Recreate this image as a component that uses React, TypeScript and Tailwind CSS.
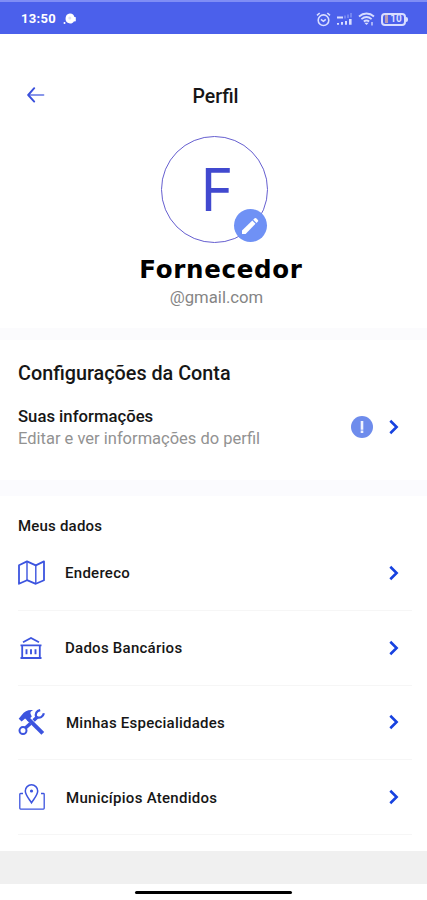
import React from 'react';

type IconProps = { className?: string };

const ChevronIcon: React.FC<IconProps> = ({ className }) => (
    <svg viewBox="0 0 10 16" fill="none" stroke="currentColor" strokeWidth="2.6" className={className}>
        <path d="M1.3 1.8 7.6 8l-6.3 6.2" />
    </svg>
);

const BackIcon: React.FC<IconProps> = ({ className }) => (
    <svg viewBox="0 0 18 16" fill="none" stroke="currentColor" strokeLinecap="round" strokeLinejoin="round" className={className}>
        <path d="M7.2 1.2 1.2 8l6 6.6" strokeWidth="1.9" />
        <path d="M1.6 8h15" strokeWidth="1.6" opacity=".8" />
    </svg>
);

const PencilIcon: React.FC<IconProps> = ({ className }) => (
    <svg viewBox="0 0 18 18" fill="currentColor" className={className}>
        <path d="M1 17v-3.6L11.3 3.6l3.2 3.2L4.6 17Z" />
        <path d="m12.2 2.7 1.4-1.4q.8-.7 1.6 0l1.7 1.7q.7.8 0 1.6l-1.4 1.4Z" />
    </svg>
);

const MapIcon: React.FC<IconProps> = ({ className }) => (
    <svg viewBox="0 0 27 25" fill="none" stroke="currentColor" strokeLinejoin="round" className={className}>
        <path d="M1 5.2 9 1.4l8.8 4L26 1.4v18.8l-8.2 3.6-8.8-3.6-8 3.6Z" strokeWidth="1.8" />
        <path d="M9 1.4v18.8M17.8 5.4v18.4" strokeWidth="1.4" />
    </svg>
);

const BankIcon: React.FC<IconProps> = ({ className }) => (
    <svg viewBox="0 0 22 22" fill="none" stroke="currentColor" className={className}>
        <path d="M3 5.2 11 1l8 4.2" strokeWidth="1.8" />
        <path d="M.5 8.3h21M.5 21h21M2.2 8.3V21M19.8 8.3V21" strokeWidth="1.8" />
        <path d="M6.5 12.3v5M11 12.3v5M15.5 12.3v5" strokeWidth="1.9" />
    </svg>
);

const ToolsIcon: React.FC<IconProps> = ({ className }) => (
    <svg viewBox="0 0 27 27" fill="none" stroke="currentColor" className={className}>
        <path d="m10.2 9.8 14.6 14.6" strokeWidth="4" />
        <path d="m7.4 19 5-4.6M15.6 11.4l4.2-4" strokeWidth="3.4" />
        <circle cx="5" cy="21.6" r="3.5" strokeWidth="2" />
        <path d="M22.2 1.2c-3.8.8-5.2 3.3-3.9 7.1 3.8 1.2 6.8-.4 7.6-4" strokeWidth="2.2" />
        <path d="M.7 9.8 3.8 6C6.5 2 10.4.7 15 1.2c-2.2 1-3 2-2.4 3.8l1.2 2.6-4.2 4.2-2.5-2.3-3.5 3Z" fill="currentColor" stroke="none" />
    </svg>
);

const PinMapIcon: React.FC<IconProps> = ({ className }) => (
    <svg viewBox="0 0 26 26" fill="none" stroke="currentColor" className={className}>
        <path d="M4 9.5H1.6q-.8 0-.8.8v14q0 .8.8.8h22.8q.8 0 .8-.8v-14q0-.8-.8-.8H22" strokeWidth="1.3" />
        <path d="M12.5 18.8C8.8 13.3 6.3 10.5 6.3 7a6.2 6.2 0 0 1 12.4 0c0 3.5-2.5 6.3-6.2 11.8Z" strokeWidth="1.5" />
        <circle cx="12.5" cy="7" r="1.6" fill="currentColor" stroke="none" />
    </svg>
);

const StatusBar = () => (
    <div className="flex h-[34px] items-center border-t-2 border-[#7f8df5] bg-[#4b60eb] pr-[19px] pl-[21px] pt-[2px] text-white">
        <span className="w-[36px] text-[13px] font-bold whitespace-nowrap tracking-[0.3px]">13:50</span>
        <svg viewBox="0 0 14 12" className="ml-[6px] h-3 w-[14px]" fill="currentColor">
            <path d="M7 .4c2.7 0 4 1.5 4.2 3.3l1.6.5v4l-2 .2C9.8 10 8.5 10.7 7 10.5L4.6 9.8 3 8.2C1.8 4 3.5.4 7 .4Z" />
            <circle cx="1.5" cy="10" r="1" />
            <circle cx="6.8" cy="5" r="1.5" fill="#dfe2f4" />
        </svg>
        <div className="ml-auto flex items-center text-[#d8ddff]">
            <svg viewBox="0 0 15 15" className="h-[15px] w-[15px]" fill="none" stroke="currentColor" strokeWidth="1.6">
                <circle cx="7.5" cy="8.2" r="5.3" />
                <path d="M1 3.4 3.7 1M14 3.4 11.3 1M4.9 7.3l2.5 2 2.4-2" />
            </svg>
            <svg viewBox="0 0 17 14" className="ml-[5px] h-[14px] w-[17px]" fill="currentColor">
                <path d="M1 11h2v1.8H1zM5 10h2v2.8H5zM9 9h2v3.8H9zM13 7h2.6v5.8H13z" />
                <path d="M1 4.5h6v2H1z" />
                <path d="M8 3.5h2v3H8zM11 2.5h2v3.5h-2zM14 1h2v4.5h-2z" opacity=".3" />
            </svg>
            <svg viewBox="0 0 17 14" className="ml-[5px] h-[14px] w-[17px]" fill="none" stroke="currentColor" strokeWidth="1.8">
                <path d="M1 4.5c4.5-4 10.5-4 15 0M3.4 7.1c3.2-2.7 7-2.7 10.2 0M5.8 9.5c1.8-1.4 3.6-1.4 5.4 0" />
                <path d="m6.3 10.8 2.2 2.3 2.2-2.3Z" fill="currentColor" stroke="none" />
                <path d="M14 10v3.6" strokeWidth="1.3" />
            </svg>
            <div className="ml-[6px] flex h-[13px] w-[25px] items-center justify-center rounded-[4px] border-2 border-[#d8ddff]">
                <span className="mr-[2px] h-[8px] w-[3px] bg-[#b99bb4]" />
                <span className="text-[10px] leading-none font-bold">10</span>
            </div>
            <span className="h-[5px] w-[2px] rounded-r-sm bg-[#d8ddff]" />
        </div>
    </div>
);

const menuItems = [
    { label: 'Endereco', icon: <MapIcon className="h-[25px] w-[27px]" />, labelClass: 'ml-[20px] tracking-[0.28px]' },
    { label: 'Dados Bancários', icon: <BankIcon className="ml-[2px] h-[22px] w-[22px]" />, labelClass: 'ml-[20px] tracking-[0.26px]' },
    { label: 'Minhas Especialidades', icon: <ToolsIcon className="h-[27px] w-[27px]" />, labelClass: 'ml-[21px] tracking-[0.24px]' },
    { label: 'Municípios Atendidos', icon: <PinMapIcon className="ml-[1px] h-[26px] w-[26px]" />, labelClass: 'ml-[21px] tracking-[0.28px]' },
];

const App: React.FC = () => {
    return (
        <div className="flex h-[900px] w-[427px] flex-col overflow-hidden bg-white font-['Roboto','Liberation_Sans',sans-serif] text-[#161616]">
            <StatusBar />

            <section className="flex h-[294px] flex-col items-center">
                <header className="mt-[46px] grid h-8 w-full grid-cols-3 items-center px-[27px]">
                    <button aria-label="Voltar" className="pb-[3px] text-[#3a50dc]">
                        <BackIcon className="h-4 w-[18px]" />
                    </button>
                    <h1 className="pt-[2px] pl-[4px] text-center text-[19.5px] leading-[30px] font-medium whitespace-nowrap">Perfil</h1>
                </header>
                <div className="relative mt-[24px] ml-px flex h-[107px] w-[107px] items-center justify-center rounded-full border border-[#665fd0]">
                    <span className="pb-[3px] pl-[3px] font-['Noto_Sans',sans-serif] text-[60px] leading-none text-[#4149cf]">F</span>
                    <button aria-label="Editar foto" className="absolute right-0 bottom-0 flex h-[33px] w-[33px] items-center justify-center rounded-full bg-[#6f91f5] text-white">
                        <PencilIcon className="h-[18px] w-[18px]" />
                    </button>
                </div>
                <h2 className="mt-[11px] ml-[15px] font-['DejaVu_Sans',sans-serif] text-[24.5px] leading-8 font-bold whitespace-nowrap tracking-[0.7px] text-black">Fornecedor</h2>
                <p className="mt-[2px] ml-[6px] text-[16.7px] leading-5 whitespace-nowrap text-[#858585]">@gmail.com</p>
            </section>

            <div className="h-3 bg-[#fbfbfd]" />

            <section className="flex h-[140px] flex-col px-[18px] pt-[20px]">
                <h3 className="text-[19.8px] leading-7 font-medium whitespace-nowrap">Configurações da Conta</h3>
                <div className="mt-[16px] flex items-center">
                    <div className="pt-[2px]">
                        <p className="text-[16.7px] leading-[22px] font-medium whitespace-nowrap">Suas informações</p>
                        <p className="text-[16.5px] leading-[22px] whitespace-nowrap text-[#929292]">Editar e ver informações do perfil</p>
                    </div>
                    <span className="mr-[16px] ml-auto flex h-[22px] w-[22px] items-center justify-center rounded-full bg-[#6e8cec]">
                        <svg viewBox="0 0 4 12" className="h-3 w-1" fill="#f0f3ff">
                            <path d="M.7 0h2.6v8.8H.7zM.7 9.6h2.6V12H.7z" />
                        </svg>
                    </span>
                    <ChevronIcon className="mr-[10px] h-4 w-[10px] text-[#1742e0]" />
                </div>
            </section>

            <div className="h-4 bg-[#fbfbfe]" />

            <section className="flex h-[355px] flex-col">
                <h3 className="mt-[20px] ml-[18px] text-[15px] leading-5 font-medium whitespace-nowrap tracking-[0.2px]">Meus dados</h3>
                <ul className="mr-[15px] ml-[18px]">
                    {menuItems.map((item) => (
                        <li key={item.label} className="flex h-[74.8px] items-center border-b border-[#f6f6f6]">
                            <span className="flex w-[27px] text-[#3c54df]">{item.icon}</span>
                            <span className={`pt-px text-[15px] font-medium whitespace-nowrap ${item.labelClass}`}>{item.label}</span>
                            <ChevronIcon className="mr-[13px] ml-auto h-4 w-[10px] text-[#1742e0]" />
                        </li>
                    ))}
                </ul>
            </section>

            <div className="h-[33px] bg-[#f0f0f0]" />
            <div className="flex justify-center pt-[7px]">
                <div className="h-[3px] w-[157px] rounded-full bg-black" />
            </div>
        </div>
    );
};

export default App;
